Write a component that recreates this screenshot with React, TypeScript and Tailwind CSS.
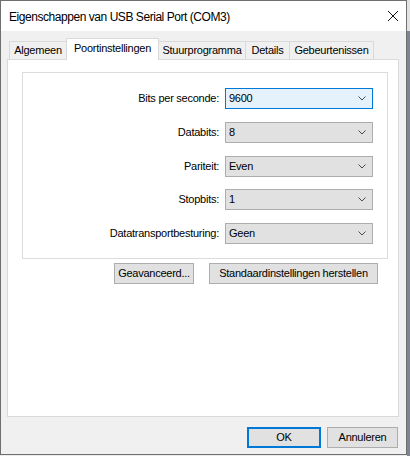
import React from 'react'

// Serial port properties dialog (Windows 10 style)

type Field = {
  label: string
  value: string
  focused?: boolean
  top: string
}

const fields: Field[] = [
  { label: 'Bits per seconde:', value: '9600', focused: true, top: 'mt-0' },
  { label: 'Databits:', value: '8', top: 'mt-[13px]' },
  { label: 'Pariteit:', value: 'Even', top: 'mt-[13px]' },
  { label: 'Stopbits:', value: '1', top: 'mt-[12px]' },
  { label: 'Datatransportbesturing:', value: 'Geen', top: 'mt-[13px]' },
]

const tabs = [
  { name: 'Algemeen', w: 'w-[58px]' },
  { name: 'Poortinstellingen', w: 'w-[93px]', active: true },
  { name: 'Stuurprogramma', w: 'w-[88px]' },
  { name: 'Details', w: 'w-[45px]' },
  { name: 'Gebeurtenissen', w: 'w-[85px]' },
]

const Chevron = () => (
  <svg width="8" height="5" viewBox="0 0 8 5" className="shrink-0">
    <path d="M0.5 0.5 L4 4 L7.5 0.5" fill="none" stroke="#4a4a4a" strokeWidth="1" />
  </svg>
)

const ComboBox = ({ value, focused }: { value: string; focused?: boolean }) => (
  <div
    className={`ml-[6px] w-[148px] h-[21px] flex items-center justify-between pl-[3px] pr-[6px] border ${
      focused ? 'border-[#0078d7] bg-[#e5f1fb]' : 'border-[#adadad] bg-[#e1e1e1]'
    }`}
  >
    <span>{value}</span>
    <Chevron />
  </div>
)

const Button = ({ label, w, primary }: { label: string; w: string; primary?: boolean }) => (
  <div
    className={`${w} h-[21px] flex items-center justify-center bg-[#e1e1e1] ${
      primary ? 'border-2 border-[#0078d7]' : 'border border-[#adadad]'
    }`}
  >
    {label}
  </div>
)

export default function App() {
  return (
    <div className="w-[410px] h-[456px] flex bg-[#ececec] font-['Liberation_Sans',Arial,sans-serif] text-black">
      <div className="w-[407px] h-[455px] shrink-0 border border-[#6f6f6f] bg-[#f0f0f0] flex flex-col">
        {/* title bar */}
        <div className="h-[30px] bg-white flex items-center justify-between pl-[8px] pr-[8px]">
          <span className="text-[12px] tracking-[-0.45px] pt-[1px]">Eigenschappen van USB Serial Port (COM3)</span>
          <svg width="10" height="10" viewBox="0 0 10 10">
            <path d="M0 0 L10 10 M10 0 L0 10" stroke="#111" strokeWidth="1" />
          </svg>
        </div>

        <div className="flex-1 pl-[6px] pt-[7px] text-[11px] tracking-[-0.25px]">
          {/* tab strip */}
          <div className="flex items-end h-[21px] pl-[2px]">
            {tabs.map((t, i) =>
              t.active ? (
                <div
                  key={t.name}
                  className={`${t.w} h-[22px] -mb-px -ml-px relative z-10 bg-white border border-b-0 border-[#d9d9d9] flex items-center justify-center pb-[2px]`}
                >
                  {t.name}
                </div>
              ) : (
                <div
                  key={t.name}
                  className={`${t.w} h-[18px] ${i > 0 ? '-ml-px' : ''} bg-[#f0f0f0] border border-b-0 border-[#d9d9d9] flex items-center justify-center`}
                >
                  {t.name}
                </div>
              )
            )}
          </div>

          {/* tab page */}
          <div className="w-[392px] h-[358px] border border-[#d9d9d9] bg-white pl-[14px] pt-[12px]">
            <div className="w-[366px] h-[187px] border border-[#dcdcdc] pt-[15px]">
              {fields.map((f) => (
                <div key={f.label} className={`flex items-center h-[21px] ${f.top}`}>
                  <div className="w-[196px] text-right">{f.label}</div>
                  <ComboBox value={f.value} focused={f.focused} />
                </div>
              ))}
            </div>
            <div className="flex gap-[15px] mt-[4px] ml-[92px]">
              <Button label="Geavanceerd..." w="w-[80px]" />
              <Button label="Standaardinstellingen herstellen" w="w-[169px]" />
            </div>
          </div>

          {/* dialog buttons */}
          <div className="flex justify-end gap-[6px] mt-[10px] pr-[8px]">
            <Button label="OK" w="w-[74px]" primary />
            <Button label="Annuleren" w="w-[71px]" />
          </div>
        </div>
      </div>
      <div className="w-[3px] flex flex-col">
        <div className="h-[31px] bg-[#e2e2e2]" />
        <div className="flex-1 bg-[#7c8692]" />
      </div>
    </div>
  )
}
